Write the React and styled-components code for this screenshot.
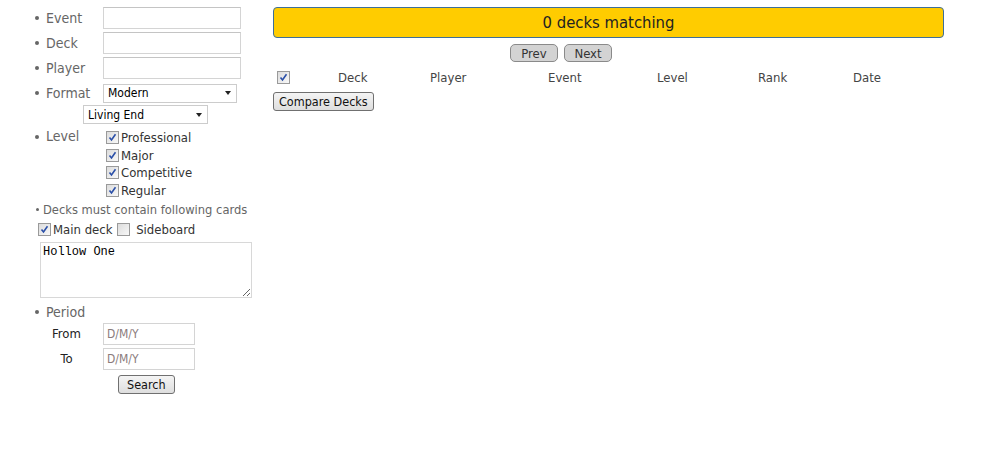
import React from 'react';
import styled, { createGlobalStyle } from 'styled-components';

const GlobalStyle = createGlobalStyle`
  body {
    margin: 0;
    background: #fff;
    font-family: "DejaVu Sans Condensed", "DejaVu Sans", sans-serif;
    color: #333;
  }
`;

const levels = ['Professional', 'Major', 'Competitive', 'Regular'];
const columns = [
  { name: 'Deck', width: 92 },
  { name: 'Player', width: 118 },
  { name: 'Event', width: 109 },
  { name: 'Level', width: 101 },
  { name: 'Rank', width: 95 },
  { name: 'Date', width: 80 },
];

function Check({ checked }) {
  return (
    <Box>
      {checked ? (
        <svg width="9" height="9" viewBox="0 0 9 9">
          <path d="M1.5 4.5 L3.5 7 L7.5 1.2" fill="none" stroke="#2a4fa8" strokeWidth="1.6" />
        </svg>
      ) : null}
    </Box>
  );
}

class App extends React.Component {
  render() {
    return (
      <Page>
        <GlobalStyle />

        {/* search form */}
        <Side>
          <Field>
            <Bullet />
            <Label>Event</Label>
            <TextInput />
          </Field>
          <Field>
            <Bullet />
            <Label>Deck</Label>
            <TextInput />
          </Field>
          <Field>
            <Bullet />
            <Label>Player</Label>
            <TextInput />
          </Field>
          <Field after={1}>
            <Bullet />
            <Label>Format</Label>
            <Select width={134}>
              <span>Modern</span>
              <Arrow />
            </Select>
          </Field>
          <SubRow>
            <Select width={125}>
              <span>Living End</span>
              <Arrow />
            </Select>
          </SubRow>

          <LevelBlock>
            <Bullet />
            <Label>Level</Label>
            <LevelList>
              {levels.map(l => (
                <CheckLine key={l}>
                  <Check checked />
                  <span>{l}</span>
                </CheckLine>
              ))}
            </LevelList>
          </LevelBlock>

          <Note>
            <Bullet small />
            Decks must contain following cards
          </Note>
          <Options>
            <CheckLine>
              <Check checked />
              <span>Main deck</span>
            </CheckLine>
            <CheckLine>
              <Check />
              <span>&nbsp;Sideboard</span>
            </CheckLine>
          </Options>
          <Cards defaultValue="Hollow One" />

          <Field before={3} after={-2}>
            <Bullet />
            <Label>Period</Label>
          </Field>
          <DateRow>
            <DateLabel>From</DateLabel>
            <DateInput placeholder="D/M/Y" />
          </DateRow>
          <DateRow>
            <DateLabel>To</DateLabel>
            <DateInput placeholder="D/M/Y" />
          </DateRow>
          <SearchRow>
            <Button pad={8}>Search</Button>
          </SearchRow>
        </Side>

        {/* results */}
        <Main>
          <Banner>0 decks matching</Banner>
          <Pager>
            <PageButton>Prev</PageButton>
            <PageButton>Next</PageButton>
          </Pager>
          <Header>
            <HeadCheck>
              <Check checked />
            </HeadCheck>
            {columns.map(c => (
              <HeadCell key={c.name} style={{ width: c.width }}>{c.name}</HeadCell>
            ))}
          </Header>
          <Button pad={5}>Compare Decks</Button>
        </Main>
      </Page>
    );
  }
}

var Page = styled.div`
  display: flex;
  padding-top: 7px;
`;
var Side = styled.div`
  width: 273px;
  padding-left: 35px;
  box-sizing: border-box;
  display: flex;
  flex-direction: column;
`;
var Field = styled.div`
  display: flex;
  align-items: center;
  height: 22px;
  margin-top: ${p => p.before || 0}px;
  margin-bottom: ${p => (p.after === undefined ? 3 : p.after)}px;
  font-size: 14px;
  color: #666;
`;
var Bullet = styled.span`
  width: ${p => (p.small ? 3 : 4)}px;
  height: ${p => (p.small ? 3 : 4)}px;
  border-radius: 50%;
  background: #666;
  margin-right: ${p => (p.small ? 4 : 7)}px;
  flex-shrink: 0;
`;
var Label = styled.span`
  width: 57px;
`;
var TextInput = styled.input`
  width: 138px;
  height: 22px;
  box-sizing: border-box;
  border: 1px solid #d4d4d4;
  border-top-color: #c4c4c4;
  padding: 0 3px;
  font: inherit;
`;
var Select = styled.div`
  width: ${p => p.width}px;
  height: 19px;
  box-sizing: border-box;
  border: 1px solid #ccc;
  display: flex;
  align-items: center;
  justify-content: space-between;
  padding: 0 5px 0 4px;
  font-size: 12px;
  color: #000;
  background: #fff;
`;
var Arrow = styled.span`
  width: 0;
  height: 0;
  border-left: 3.5px solid transparent;
  border-right: 3.5px solid transparent;
  border-top: 4px solid #222;
`;
var SubRow = styled.div`
  display: flex;
  padding-left: 48px;
  height: 19px;
  align-items: center;
`;
var LevelBlock = styled.div`
  display: flex;
  align-items: flex-start;
  font-size: 14px;
  color: #666;
  margin-top: 4px;
  line-height: 17px;

  & > ${Bullet} {
    margin-top: 7px;
  }
`;
var LevelList = styled.div`
  display: flex;
  flex-direction: column;
  color: #333;
  font-size: 13px;
  margin-left: 3px;
  padding-top: 1px;
`;
var CheckLine = styled.label`
  display: flex;
  align-items: center;
  height: 17.5px;
  font-size: 13px;
  color: #333;
`;
var Box = styled.span`
  width: 13px;
  height: 13px;
  box-sizing: border-box;
  border: 1px solid #9a9a9a;
  background: linear-gradient(135deg, #dcdcdc, #f8f8f8);
  display: inline-flex;
  align-items: center;
  justify-content: center;
  margin-right: 2px;
  flex-shrink: 0;
`;
var Note = styled.div`
  display: flex;
  align-items: center;
  font-size: 12.8px;
  color: #666;
  height: 20px;
  margin-left: 1px;
`;
var Options = styled.div`
  display: flex;
  gap: 5px;
  margin-left: 3px;
  height: 21px;
  align-items: center;
`;
var Cards = styled.textarea`
  width: 212px;
  height: 56px;
  box-sizing: border-box;
  margin: 2px 0 0 5px;
  border: 1px solid #d8d8d8;
  font-family: "Liberation Mono", monospace;
  font-size: 12px;
  padding: 2px 2px;
  resize: both;
`;
var DateRow = styled.div`
  display: flex;
  align-items: center;
  height: 25px;
`;
var DateLabel = styled.span`
  width: 63px;
  margin-right: 5px;
  text-align: center;
  font-size: 13px;
  color: #222;
`;
var DateInput = styled.input`
  width: 92px;
  height: 22px;
  box-sizing: border-box;
  border: 1px solid #d4d4d4;
  padding: 0 3px;
  font-family: "DejaVu Sans Condensed", "DejaVu Sans", sans-serif;
  font-size: 12px;
  &::placeholder {
    color: #8a7b7b;
  }
`;
var SearchRow = styled.div`
  display: flex;
  padding-left: 83px;
  margin-top: 4px;
`;
var Button = styled.button`
  font-family: "DejaVu Sans Condensed", "DejaVu Sans", sans-serif;
  font-size: 12.5px;
  color: #111;
  height: 19px;
  padding: 0 ${p => p.pad}px;
  border: 1px solid #707070;
  border-radius: 3px;
  background: linear-gradient(#f4f4f4, #dedede);
  align-self: flex-start;
`;
var Main = styled.div`
  width: 671px;
  display: flex;
  flex-direction: column;
`;
var Banner = styled.div`
  height: 31px;
  box-sizing: border-box;
  background: #ffcc00;
  border: 1px solid #3e6f98;
  border-radius: 4px;
  display: flex;
  align-items: center;
  justify-content: center;
  font-size: 16.5px;
  color: #222;
`;
var Pager = styled.div`
  display: flex;
  gap: 6px;
  padding-left: 237px;
  margin-top: 6px;
`;
var PageButton = styled.button`
  width: 48px;
  height: 18px;
  font-family: "DejaVu Sans Condensed", "DejaVu Sans", sans-serif;
  font-size: 13px;
  color: #333;
  padding: 0;
  border: 1px solid #8a8a8a;
  border-radius: 5px;
  background: #d3d3d3;
`;
var Header = styled.div`
  display: flex;
  align-items: center;
  height: 30px;
  font-size: 13px;
  color: #444;
`;
var HeadCheck = styled.div`
  width: 65px;
  padding-left: 4px;
  box-sizing: border-box;
  display: flex;
`;
var HeadCell = styled.div``;

export default App;
